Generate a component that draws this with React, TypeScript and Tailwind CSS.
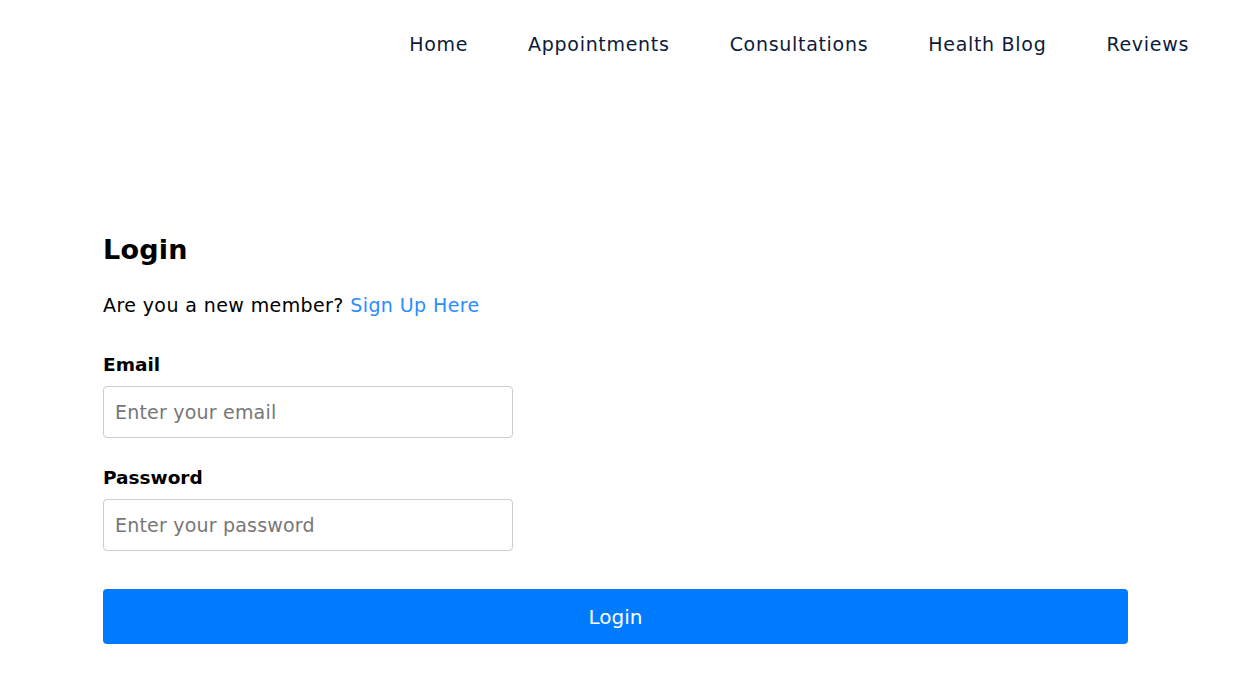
import React from "react";

const navLinks = ["Home", "Appointments", "Consultations", "Health Blog", "Reviews"];

export default function App() {
    return (
        <div className="min-h-screen bg-white text-black font-['DejaVu_Sans',sans-serif]">
            {/* header */}
            <header className="flex justify-end items-center h-[88px] pr-[18px]">
                <nav className="flex items-center">
                    {navLinks.map((link) => (
                        <a key={link} href="#" className="px-[30px] text-[19px] tracking-[0.7px] text-[#0d1b3a]">
                            {link}
                        </a>
                    ))}
                </nav>
            </header>

            {/* form */}
            <main className="pl-[103px] pr-[109px] pt-[142px]">
                <h1 className="text-[27px] font-bold leading-[40px] tracking-[0.2px]">Login</h1>
                <p className="mt-[21px] text-[19px] tracking-[0.4px] leading-[28px]">
                    Are you a new member? <a href="#" className="text-[#2b8cff]">Sign Up Here</a>
                </p>

                <label className="block mt-[32px] text-[18.5px] font-bold leading-[28px]">Email</label>
                <input
                    type="email"
                    placeholder="Enter your email"
                    className="block mt-[7px] w-[410px] h-[52px] px-[11px] border border-[#cccccc] rounded-[4px] text-[19px] tracking-[0.2px] placeholder:text-[#777777] outline-none"
                />

                <label className="block mt-[26px] text-[18.5px] font-bold leading-[28px]">Password</label>
                <input
                    type="password"
                    placeholder="Enter your password"
                    className="block mt-[7px] w-[410px] h-[52px] px-[11px] border border-[#cccccc] rounded-[4px] text-[19px] tracking-[0.2px] placeholder:text-[#777777] outline-none"
                />

                <button className="mt-[38px] w-full h-[55px] bg-[#007bff] text-white text-[20px] rounded-[4px]">
                    Login
                </button>
            </main>
        </div>
    );
}
